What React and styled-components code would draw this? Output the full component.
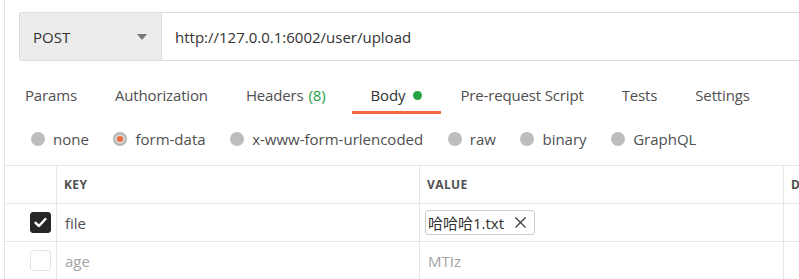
import React, { useState } from 'react';
import styled, { createGlobalStyle } from 'styled-components';
import { X } from 'lucide-react';

const GlobalStyle = createGlobalStyle`
  body {
    margin: 0;
    background: #fff;
    font-family: 'Open Sans', 'Noto Sans CJK SC', sans-serif;
    color: #505050;
  }
`;

const tabs = [
  { label: 'Params' },
  { label: 'Authorization' },
  { label: 'Headers', count: 8 },
  { label: 'Body', dot: true },
  { label: 'Pre-request Script' },
  { label: 'Tests' },
  { label: 'Settings' },
];

const bodyTypes = ['none', 'form-data', 'x-www-form-urlencoded', 'raw', 'binary', 'GraphQL'];

const rows = [
  { key: 'file', file: '哈哈哈1.txt', checked: true },
  { key: 'age', value: 'MTIz', placeholder: true },
];

function App() {
  const [activeTab, setActiveTab] = useState('Body');
  const [bodyType, setBodyType] = useState('form-data');

  return (
    <>
      <GlobalStyle />
      <Page>
        <Rail />
        <Main>
          <UrlBar>
            <MethodSelect>
              <span>POST</span>
              <Caret />
            </MethodSelect>
            <UrlInput>http://127.0.0.1:6002/user/upload</UrlInput>
          </UrlBar>

          <Tabs>
            {tabs.map((t) => (
              <Tab key={t.label} $active={activeTab === t.label} onClick={() => setActiveTab(t.label)}>
                {t.label}
                {t.count && <Count>({t.count})</Count>}
                {t.dot && <Dot />}
              </Tab>
            ))}
          </Tabs>

          <RadioRow>
            {bodyTypes.map((b) => (
              <RadioItem key={b} onClick={() => setBodyType(b)}>
                <Radio $checked={bodyType === b} />
                {b}
              </RadioItem>
            ))}
          </RadioRow>

          <Table>
            <Row>
              <Cell $w="52px" />
              <HeadCell $w="363px">Key</HeadCell>
              <HeadCell $w="364px">Value</HeadCell>
              <HeadCell $last>Description</HeadCell>
            </Row>
            {rows.map((r) => (
              <Row key={r.key}>
                <CheckCell $w="52px">
                  <Checkbox $checked={r.checked}>
                    {r.checked && (
                      <svg width="15" height="15" viewBox="0 0 15 15">
                        <path d="M2.6 7.8 L6 11 L12.4 4" fill="none" stroke="#fff" strokeWidth="2.5" strokeLinecap="round" strokeLinejoin="round" />
                      </svg>
                    )}
                  </Checkbox>
                </CheckCell>
                <TextCell $w="363px" $muted={r.placeholder}>{r.key}</TextCell>
                {r.file ? (
                  <FileCell $w="364px">
                    <FileChip>
                      {r.file}
                      <X size={19} strokeWidth={1.4} color="#333" />
                    </FileChip>
                  </FileCell>
                ) : (
                  <TextCell $w="364px" $muted={r.placeholder}>{r.value}</TextCell>
                )}
                <Cell $last />
              </Row>
            ))}
          </Table>
        </Main>
      </Page>
    </>
  );
}

export default App;

const Page = styled.div`
  display: flex;
  width: 799px;
  height: 279px;
  overflow: hidden;
`;

const Rail = styled.div`
  width: 4px;
  flex-shrink: 0;
  border-right: 1px solid #e2e2e2;
`;

const Main = styled.div`
  flex: 1;
  min-width: 0;
  padding-top: 12px;
`;

const UrlBar = styled.div`
  display: flex;
  height: 49px;
  margin-left: 14px;
`;

const MethodSelect = styled.div`
  box-sizing: border-box;
  width: 142px;
  flex-shrink: 0;
  display: flex;
  align-items: center;
  justify-content: space-between;
  padding: 0 14px 0 13px;
  background: #ececec;
  border: 1px solid #dcdcdc;
  border-right: none;
  border-radius: 3px 0 0 3px;
  font-size: 15px;
  color: #333;
`;

const Caret = styled.span`
  width: 0;
  height: 0;
  border-left: 5px solid transparent;
  border-right: 5px solid transparent;
  border-top: 6px solid #777;
  margin-top: 1px;
`;

const UrlInput = styled.div`
  box-sizing: border-box;
  flex: 1;
  display: flex;
  align-items: center;
  padding-left: 13px;
  border-top: 1px solid #dcdcdc;
  border-bottom: 1px solid #dcdcdc;
  border-left: 1px solid #dcdcdc;
  font-size: 15px;
  color: #333;
  white-space: nowrap;
`;

const Tabs = styled.div`
  display: flex;
  margin-left: 1px;
`;

const Tab = styled.div`
  display: flex;
  align-items: center;
  padding: 24px 19px 6px;
  line-height: 20px;
  font-size: 15px;
  letter-spacing: -0.15px;
  color: ${({ $active }) => ($active ? '#333' : '#505050')};
  border-bottom: 3px solid ${({ $active }) => ($active ? '#f26b3a' : 'transparent')};
  white-space: nowrap;
  cursor: pointer;
`;

const Count = styled.span`
  margin: 0 7px 0 5px;
  color: #1f9e45;
`;

const Dot = styled.span`
  width: 9px;
  height: 9px;
  margin-left: 8px;
  border-radius: 50%;
  background: #26a344;
`;

const RadioRow = styled.div`
  display: flex;
  align-items: center;
  gap: 24.6px;
  height: 20px;
  margin: 15px 0 16px 26px;
`;

const RadioItem = styled.label`
  display: flex;
  align-items: center;
  gap: 8px;
  font-size: 15px;
  line-height: 20px;
  color: #505050;
  white-space: nowrap;
  cursor: pointer;
`;

const Radio = styled.span`
  box-sizing: border-box;
  width: 14px;
  height: 14px;
  border-radius: 50%;
  background: ${({ $checked }) => ($checked ? '#d4d4d4' : '#bdbdbd')};
  border: ${({ $checked }) => ($checked ? '2px solid #b5b5b5' : 'none')};
  display: flex;
  align-items: center;
  justify-content: center;

  &::after {
    content: '';
    display: ${({ $checked }) => ($checked ? 'block' : 'none')};
    width: 6px;
    height: 6px;
    border-radius: 50%;
    background: #f26b3a;
  }
`;

const Table = styled.div`
  border-top: 1px solid #e6e6e6;
`;

const Row = styled.div`
  display: flex;
  height: 38px;
  box-sizing: border-box;
  border-bottom: 1px solid #e6e6e6;
`;

const Cell = styled.div`
  box-sizing: border-box;
  display: flex;
  align-items: center;
  width: ${({ $w }) => $w || 'auto'};
  flex: ${({ $last }) => ($last ? '1' : 'none')};
  min-width: 0;
  border-right: ${({ $last }) => ($last ? 'none' : '1px solid #e6e6e6')};
  white-space: nowrap;
  overflow: hidden;
`;

const HeadCell = styled(Cell)`
  padding-left: 7px;
  font-size: 12px;
  font-weight: 700;
  letter-spacing: 0.4px;
  text-transform: uppercase;
  color: #505050;
`;

const CheckCell = styled(Cell)`
  justify-content: flex-end;
  padding-right: 5px;
`;

const Checkbox = styled.span`
  box-sizing: border-box;
  width: 21px;
  height: 21px;
  border-radius: 3px;
  display: flex;
  align-items: center;
  justify-content: center;
  background: ${({ $checked }) => ($checked ? '#262626' : '#fff')};
  border: 1px solid ${({ $checked }) => ($checked ? '#262626' : '#e4e4e4')};
`;

const TextCell = styled(Cell)`
  padding-left: 8px;
  font-size: 15px;
  color: ${({ $muted }) => ($muted ? '#a3a3a3' : '#505050')};
`;

const FileCell = styled(Cell)`
  padding-left: 5px;
`;

const FileChip = styled.span`
  box-sizing: border-box;
  display: flex;
  align-items: center;
  gap: 7px;
  height: 25px;
  padding: 0 4px 0 2px;
  border: 1px solid #cfcfcf;
  border-radius: 3px;
  font-size: 15px;
  color: #333;
`;
